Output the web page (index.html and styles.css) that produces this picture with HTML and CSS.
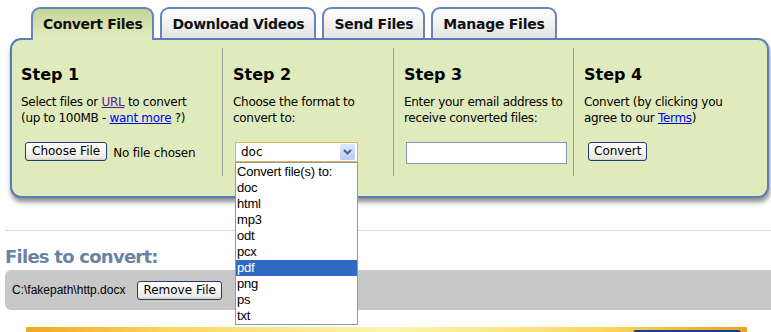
FILE: index.html
```html
<!DOCTYPE html>
<html>
<head>
<meta charset="utf-8">
<link rel="stylesheet" href="styles.css">
</head>
<body>
<div class="page">
  <div class="tabs">
    <div class="tab active">Convert Files</div>
    <div class="tab">Download Videos</div>
    <div class="tab">Send Files</div>
    <div class="tab">Manage Files</div>
  </div>
  <div class="panel">
    <div class="step">
      <h2 class="step-title">Step 1</h2>
      <p class="step-text">Select files or <a class="visited" href="#">URL</a> to convert<br>(up to 100MB - <a href="#">want more</a> ?)</p>
      <div class="step-ctrl file-ctrl"><span class="btn choose-btn">Choose File</span><span class="nofile">No file chosen</span></div>
    </div>
    <div class="step">
      <h2 class="step-title">Step 2</h2>
      <p class="step-text">Choose the format to<br>convert to:</p>
      <div class="step-ctrl">
        <div class="select">
          <span class="select-val">doc</span>
          <span class="select-arrow"><svg width="9" height="6" viewBox="0 0 9 6"><path d="M1 1 L4.5 4.5 L8 1" fill="none" stroke="#4d6185" stroke-width="2"/></svg></span>
          <ul class="options">
            <li>Convert file(s) to:</li>
            <li>doc</li>
            <li>html</li>
            <li>mp3</li>
            <li>odt</li>
            <li>pcx</li>
            <li class="sel">pdf</li>
            <li>png</li>
            <li>ps</li>
            <li>txt</li>
          </ul>
        </div>
      </div>
    </div>
    <div class="step">
      <h2 class="step-title">Step 3</h2>
      <p class="step-text">Enter your email address to<br>receive converted files:</p>
      <div class="step-ctrl"><span class="email"></span></div>
    </div>
    <div class="step">
      <h2 class="step-title">Step 4</h2>
      <p class="step-text">Convert (by clicking you<br>agree to our <a href="#">Terms</a>)</p>
      <div class="step-ctrl"><span class="btn convert-btn">Convert</span></div>
    </div>
  </div>
  <hr class="rule">
  <h3 class="files-title">Files to convert:</h3>
  <div class="files-bar">
    <span class="path">C:\fakepath\http.docx</span>
    <span class="btn">Remove File</span>
  </div>
  <div class="banner"><span class="banner-box"></span></div>
</div>
</body>
</html>
```
FILE: styles.css
```css
html, body { margin: 0; padding: 0; background: #fff; }
body { font-family: "DejaVu Sans", Verdana, sans-serif; color: #000; overflow: hidden; height: 332px; }
.page { padding-top: 7px; width: 771px; }

.tabs { display: flex; gap: 6px; margin-left: 31px; height: 31px; position: relative; z-index: 2; }
.tab {
  box-sizing: border-box; height: 31px; padding: 0 10px;
  border: 2px solid #6584c0; border-bottom: none; border-radius: 9px 9px 0 0;
  background: linear-gradient(#ffffff, #e3e3e3);
  font: bold 14px "DejaVu Sans", sans-serif; line-height: 31px; color: #111;
  letter-spacing: -0.25px;
}
.tab.active {
  height: 33px; margin-bottom: -2px; letter-spacing: -0.35px;
  background: linear-gradient(#c5d597, #e0ebbd 90%);
}

.panel {
  margin-left: 10px; width: 759px; box-sizing: border-box; height: 160px;
  border: 2px solid #5b7bbd; border-radius: 11px;
  background: #e0ebbd;
  box-shadow: 1px 4px 5px rgba(0,0,0,0.45);
  display: grid; grid-template-columns: 210px 171px 180px 1fr;
  padding-top: 8px;
}
.step { border-left: 1px solid #9a9a9a; height: 128px; padding-left: 10px; }
.step:first-child { border-left: 1px solid transparent; padding-left: 8px; }
.step-title { margin: 17px 0 0; font: bold 16px "DejaVu Sans", sans-serif; line-height: 20px; }
.step-text { margin: 9px 0 0; font: 12px "DejaVu Sans", sans-serif; line-height: 16px; letter-spacing: -0.3px; }
a { color: #0000ee; }
a.visited { color: #551a8b; }
.step-ctrl { margin-top: 16px; display: flex; align-items: center; }
.file-ctrl { padding-left: 4px; }

.btn {
  display: inline-block; box-sizing: border-box; height: 19px; padding: 0 5px;
  border: 1px solid #1f3e6e; border-radius: 3px;
  background: linear-gradient(#ffffff, #ecebe6 85%, #d6d0c5);
  font: 12px "DejaVu Sans", sans-serif; line-height: 17px; letter-spacing: 0;
}
.choose-btn { padding: 0 6px; }
.nofile { font: 12px "DejaVu Sans", sans-serif; margin-left: 6px; letter-spacing: -0.2px; padding-top: 2px; }

.select {
  position: relative; box-sizing: border-box; width: 123px; height: 20px; margin-left: 2px;
  border: 1px solid #e0b44a; background: #fff; display: flex; align-items: center;
}
.select-val { font: 12px "DejaVu Sans", sans-serif; padding-left: 5px; flex: 1; }
.select-arrow {
  width: 15px; height: 16px; margin-right: 2px; border-radius: 2px;
  background: linear-gradient(#dde8fc, #b9cbf3); display: flex; align-items: center; justify-content: center;
}
.options {
  position: absolute; left: -1px; top: 19px; width: 123px; box-sizing: border-box;
  margin: 0; padding: 1px 0 0; list-style: none; background: #fff; border: 1px solid #7f9db9;
  font: 13px "Liberation Sans", Arial, sans-serif; letter-spacing: -0.2px; z-index: 5;
}
.options li { height: 16px; line-height: 16px; padding-left: 1px; }
.options li.sel { background: #316ac5; color: #fff; }

.email { display: block; box-sizing: border-box; width: 161px; height: 22px; margin-left: 2px; border: 1px solid #7f9db9; background: #fff; }
.convert-btn { margin-left: 4px; padding: 0 5px; }

.rule { margin: 32px 0 0 5px; border: none; border-top: 1px solid #dadada; height: 0; }
.files-title { margin: 13px 0 0 5px; font: bold 18px "DejaVu Sans", sans-serif; color: #6a83a3; line-height: 26px; letter-spacing: -0.75px; }
.files-bar {
  margin: 0 0 0 5px; height: 40px; background: #c8c8c8; border-radius: 6px 0 0 6px;
  display: flex; align-items: center; padding-left: 7px;
}
.path { font: 12px "Liberation Sans", Arial, sans-serif; margin-right: 12px; }
.banner {
  margin: 17px 0 0 26px; width: 721px; height: 20px; position: relative;
  background: linear-gradient(90deg, #f0a820, #f8d860 20%, #fff4b0 50%, #f8d860 80%, #f0a020);
}
.banner-box { position: absolute; left: 607px; top: 3px; width: 108px; height: 20px; background: #1d3d8a; border-radius: 3px; }
```
